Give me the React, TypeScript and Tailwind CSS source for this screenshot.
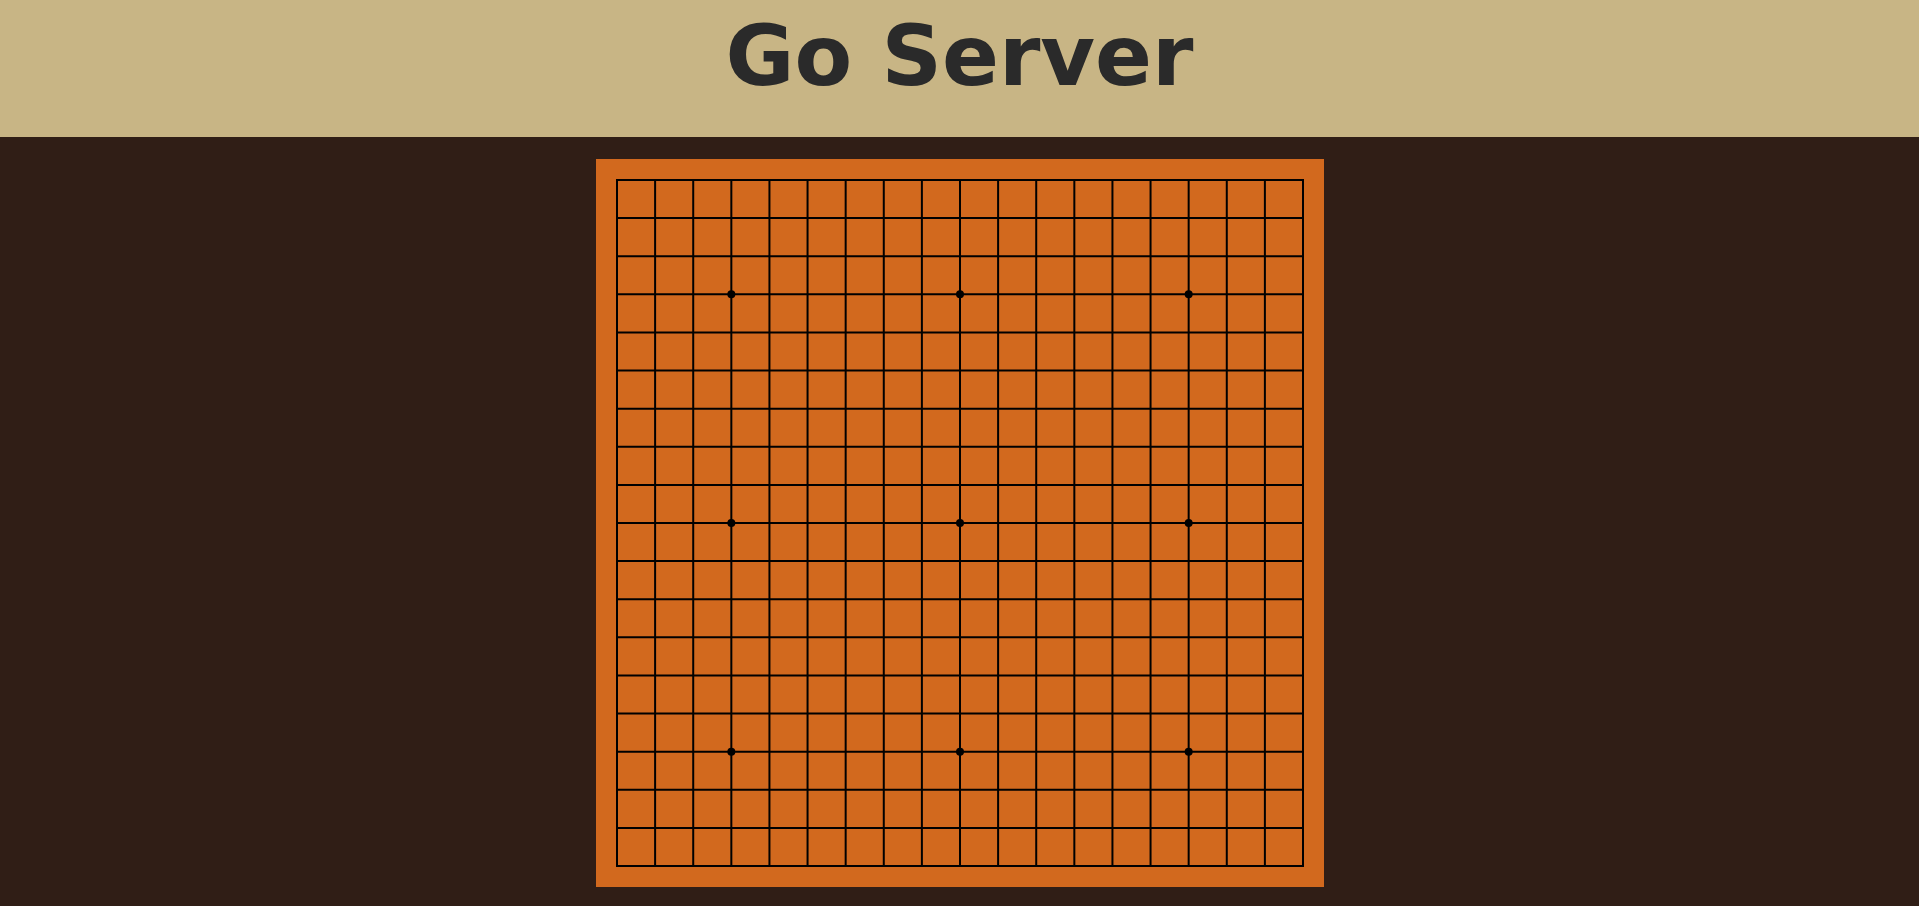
import React from "react";

export default function App() {
  const n = 19;
  const size = 688;
  const step = (size - 2) / (n - 1);
  const pos = (i: number) => 1 + i * step;
  const stars = [3, 9, 15];
  return (
    <div className="min-h-screen bg-[#301e16]" style={{ fontFamily: '"DejaVu Sans", sans-serif' }}>
      <header className="h-[137px] bg-[#c8b585] pt-[14px]">
        <h1 className="text-center text-[84px] font-bold leading-none text-[#2a2a2a]">Go Server</h1>
      </header>
      <main className="flex justify-center pt-[22px]">
        <div className="bg-[#d2691e] p-[20px]">
          <svg width={size} height={size} viewBox={`0 0 ${size} ${size}`} className="block">
            {Array.from({ length: n }).map((_, i) => (
              <g key={i}>
                <line x1={pos(i)} y1={0} x2={pos(i)} y2={size} stroke="#000" strokeWidth={2} />
                <line x1={0} y1={pos(i)} x2={size} y2={pos(i)} stroke="#000" strokeWidth={2} />
              </g>
            ))}
            {stars.map((r) =>
              stars.map((c) => <circle key={`${r}-${c}`} cx={pos(c)} cy={pos(r)} r={4} fill="#000" />)
            )}
          </svg>
        </div>
      </main>
    </div>
  );
}
